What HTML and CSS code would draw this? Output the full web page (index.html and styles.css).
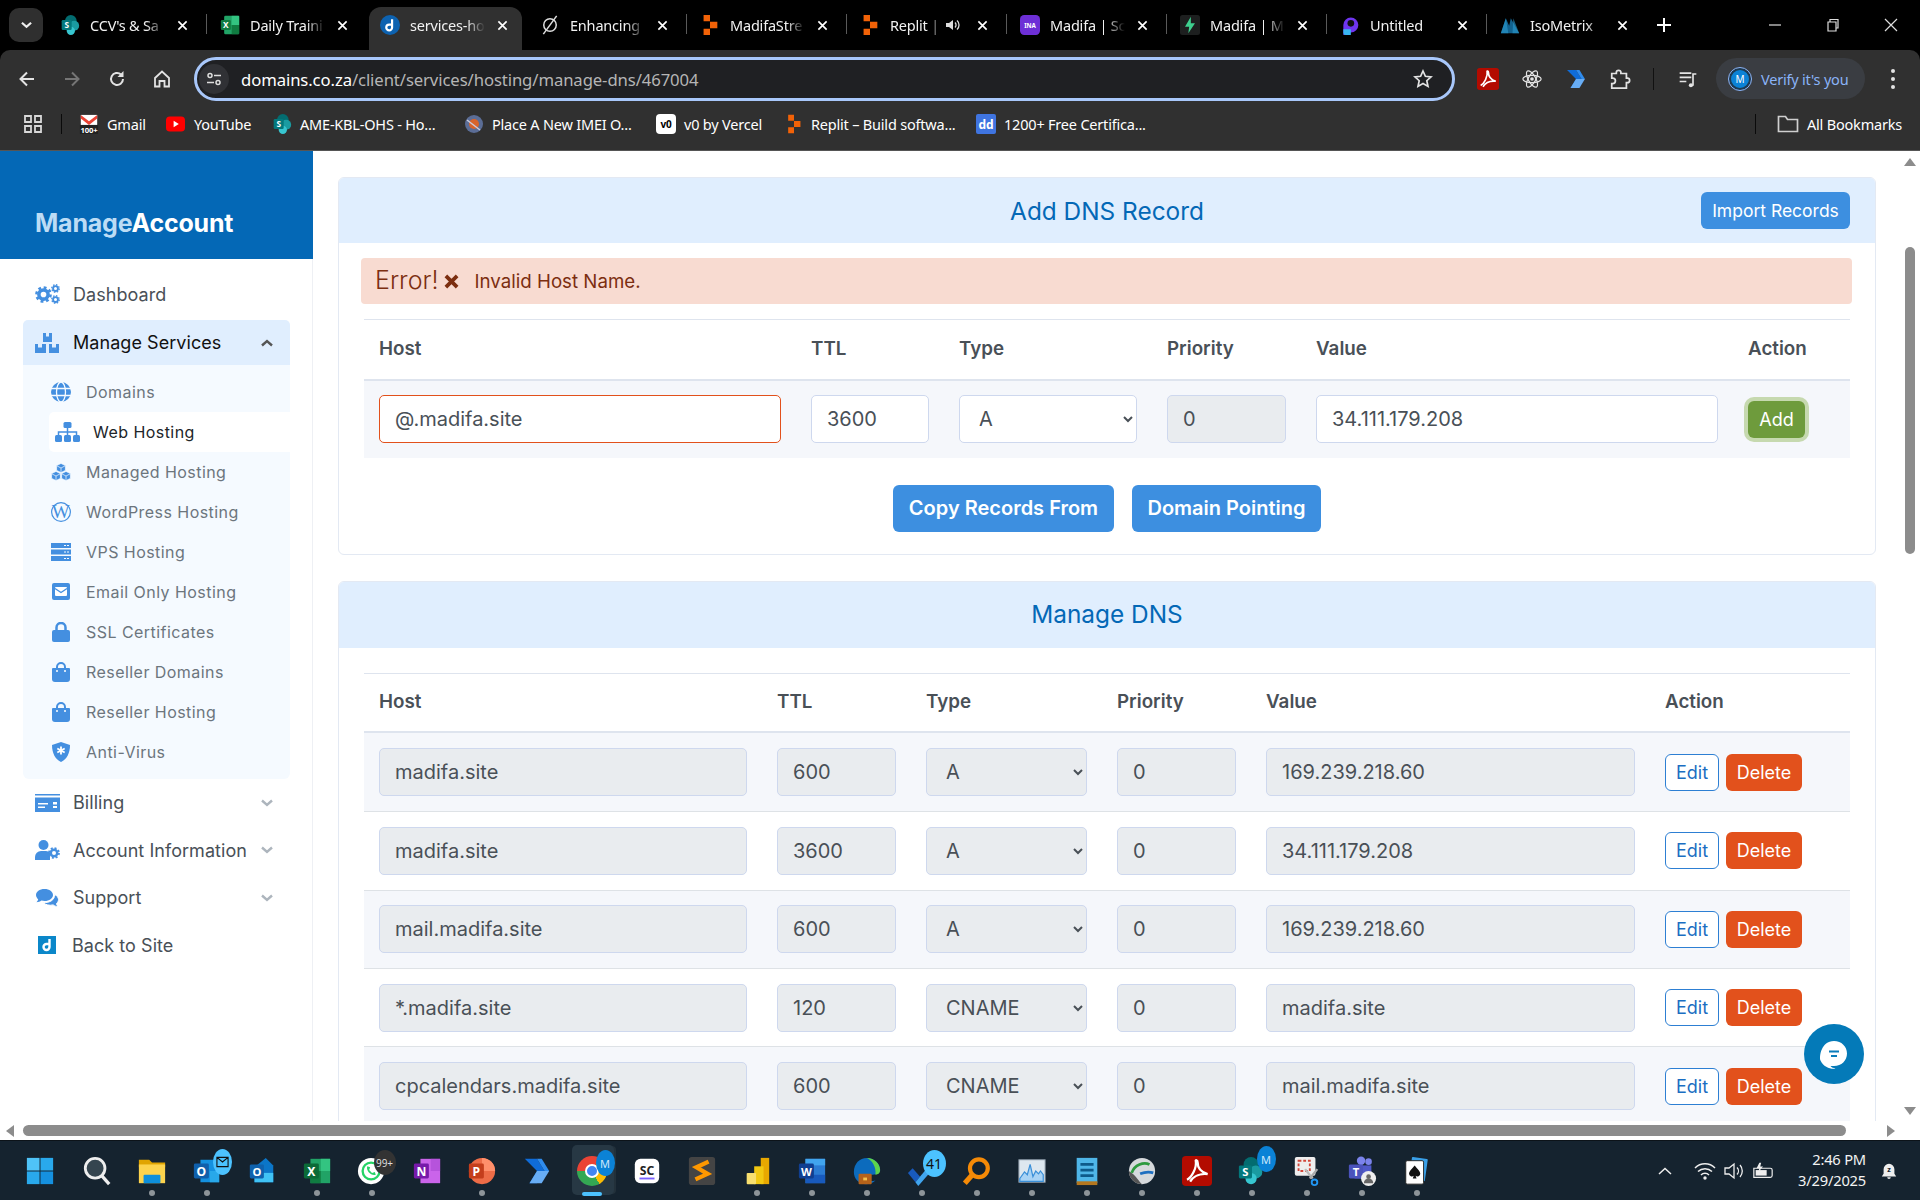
FILE: index.html
```html
<!DOCTYPE html>
<html lang="en">
<head>
<meta charset="utf-8">
<title>services-hosting</title>
<link rel="stylesheet" href="styles.css">
</head>
<body>
<svg class="defs" width="0" height="0" aria-hidden="true">
  <defs>
    <symbol id="replit" viewBox="0 0 16 24"><path fill="#f26207" d="M1 1h7v7H1zM8 8.500h8v7H8zM1 16h7v7H1z"/></symbol>
    <symbol id="sp" viewBox="0 0 24 24"><circle cx="13" cy="7" r="7" fill="#036c70"/><circle cx="17" cy="13" r="6" fill="#1a9ba1"/><circle cx="13" cy="19" r="5" fill="#37c6d0"/><rect x="2" y="6" width="12" height="12" rx="1.500" fill="#03787c"/><text x="8" y="15.500" text-anchor="middle" font-size="10" font-weight="700" fill="#fff" font-family="Noto Sans">S</text></symbol>
    <symbol id="azure" viewBox="0 0 32 32"><path fill="#0f6cd9" d="M3 3h13l8 13-8 13-8 0 8-13z"/><path fill="#68adf5" d="M16 16h13l-8 13H8z"/><path fill="#2f8cee" d="M16 3l8 13h5L21 3z"/></symbol>
    <symbol id="acrobat" viewBox="0 0 24 24"><rect width="24" height="24" rx="3" fill="#b30b00"/><path fill="none" stroke="#fff" stroke-width="1.800" d="M4 19c4-2 8-10 7-15-.5-1 1.500-1 1.500 1 0 5 3 8 8 9.500-5-.5-11 1-14 6"/></symbol>
    <symbol id="gear" viewBox="0 0 24 24"><circle cx="12" cy="12" r="6.500" fill="none" stroke="currentColor" stroke-width="5"/><circle cx="12" cy="12" r="10" fill="none" stroke="currentColor" stroke-width="3.500" stroke-dasharray="4 3.850"/></symbol>
    <symbol id="bag" viewBox="0 0 18 20"><path fill="currentColor" d="M1 6h16a1 1 0 0 1 1 1v10a3 3 0 0 1-3 3H3a3 3 0 0 1-3-3V7a1 1 0 0 1 1-1z"/><path fill="none" stroke="currentColor" stroke-width="2" d="M5 8V5a4 4 0 0 1 8 0v3"/><circle cx="5" cy="9" r="1" fill="#fff"/><circle cx="13" cy="9" r="1" fill="#fff"/></symbol>
    <symbol id="chev" viewBox="0 0 12 8"><path fill="none" stroke="currentColor" stroke-width="2.400" d="M1 1.500l5 4.500 5-4.500"/></symbol>
    <symbol id="x" viewBox="0 0 12 12"><path stroke="currentColor" stroke-width="1.800" d="M1.500 1.500l9 9M10.500 1.500l-9 9"/></symbol>
    <symbol id="cube" viewBox="0 0 10 10"><path fill="currentColor" stroke="#f5faff" stroke-width=".7" d="M5 .4l4.400 2.200v4.800L5 9.600.6 7.400V2.600z"/><path fill="none" stroke="#f5faff" stroke-width=".7" d="M.8 2.800L5 5l4.200-2.200M5 5v4.600"/></symbol>
  </defs>
</svg>

<header class="chrome">
  <div class="tabstrip">
    <div class="tab-search"><svg class="chev-sm" viewBox="0 0 12 8"><use href="#chev"/></svg></div>
    <div class="tab"><svg class="fav"><use href="#sp"/></svg><span class="tab-title">CCV's &amp; Sa</span><svg class="tab-x"><use href="#x"/></svg></div>
    <div class="tab sep"><svg class="fav" viewBox="0 0 24 24"><rect x="5" y="1" width="18" height="22" rx="1.500" fill="#21a366"/><rect x="14" y="1" width="9" height="11" fill="#33c481"/><rect x="14" y="12" width="9" height="11" fill="#107c41"/><rect x="1" y="6" width="12" height="12" rx="1.500" fill="#107c41"/><text x="7" y="15.500" text-anchor="middle" font-size="10" font-weight="700" fill="#fff" font-family="Noto Sans">X</text></svg><span class="tab-title">Daily Traini</span><svg class="tab-x"><use href="#x"/></svg></div>
    <div class="tab active"><svg class="fav" viewBox="0 0 24 24"><circle cx="12" cy="12" r="12" fill="#0d62b0"/><path fill="none" stroke="#fff" stroke-width="2.600" d="M14.500 5v10a3.500 3.500 0 1 1-3.500-3.500h3"/></svg><span class="tab-title">services-ho</span><svg class="tab-x"><use href="#x"/></svg></div>
    <div class="tab"><svg class="fav" viewBox="0 0 24 24"><circle cx="12" cy="12" r="7.500" fill="none" stroke="#ddd" stroke-width="1.800"/><path stroke="#ddd" stroke-width="1.800" d="M4 23L20 1"/></svg><span class="tab-title">Enhancing</span><svg class="tab-x"><use href="#x"/></svg></div>
    <div class="tab sep"><svg class="fav"><use href="#replit"/></svg><span class="tab-title">MadifaStre</span><svg class="tab-x"><use href="#x"/></svg></div>
    <div class="tab sep"><svg class="fav"><use href="#replit"/></svg><span class="tab-title tab-short">Replit |</span><svg class="tab-sound" viewBox="0 0 16 16"><path fill="#ddd" d="M1 6h3l4-3v10l-4-3H1z"/><path fill="none" stroke="#ddd" stroke-width="1.300" d="M10 5.500a3.500 3.500 0 0 1 0 5M12 3.500a6 6 0 0 1 0 9"/></svg><svg class="tab-x"><use href="#x"/></svg></div>
    <div class="tab sep"><svg class="fav" viewBox="0 0 24 24"><rect width="24" height="24" rx="5" fill="#6d2fd6"/><text x="12" y="15" text-anchor="middle" font-size="7.500" font-weight="700" fill="#fff" font-family="Noto Sans">INA</text></svg><span class="tab-title">Madifa | Sc</span><svg class="tab-x"><use href="#x"/></svg></div>
    <div class="tab sep"><svg class="fav" viewBox="0 0 24 24"><rect width="24" height="24" rx="3" fill="#1d1f1f"/><path fill="#3ecf8e" d="M13 2L6 14h5l-1 8 8-12h-5z"/></svg><span class="tab-title">Madifa | M</span><svg class="tab-x"><use href="#x"/></svg></div>
    <div class="tab sep"><svg class="fav" viewBox="0 0 24 24"><path fill="#6e35ee" d="M4 12a9 9 0 1 1 9 9H9v3H4z"/><path fill="#38b6f1" d="M4 17h9v7H7a3 3 0 0 1-3-3z"/><circle cx="13" cy="10" r="4" fill="#111"/></svg><span class="tab-title">Untitled</span><svg class="tab-x"><use href="#x"/></svg></div>
    <div class="tab sep"><svg class="fav" viewBox="0 0 24 24"><path fill="#12628f" d="M1 22L7 4l4 9 2-9 10 18z"/><path fill="#2c9bce" d="M7 4l3 18H1zM16 4l7 18h-8z" opacity=".6"/></svg><span class="tab-title">IsoMetrix</span><svg class="tab-x"><use href="#x"/></svg></div>
    <div class="tab-new"><svg viewBox="0 0 14 14"><path stroke="#fff" stroke-width="2" d="M7 0v14M0 7h14"/></svg></div>
    <div class="win-controls">
      <svg viewBox="0 0 14 14"><path stroke="#ddd" stroke-width="1.200" d="M1 7h12"/></svg>
      <svg viewBox="0 0 14 14"><path fill="none" stroke="#ddd" stroke-width="1.200" d="M2 4h8v9H2zM4 4V1.500h8V10h-2"/></svg>
      <svg viewBox="0 0 14 14"><path stroke="#ddd" stroke-width="1.200" d="M1 1l12 12M13 1L1 13"/></svg>
    </div>
  </div>

  <div class="toolbar">
    <svg class="nav-btn" viewBox="0 0 20 20"><path fill="none" stroke="#e3e3e3" stroke-width="2" d="M17 10H4M10 3.500L3.500 10l6.500 6.500"/></svg>
    <svg class="nav-btn" viewBox="0 0 20 20"><path fill="none" stroke="#757575" stroke-width="2" d="M3 10h13M10 3.500l6.500 6.500-6.500 6.500"/></svg>
    <svg class="nav-btn" viewBox="0 0 20 20"><path fill="none" stroke="#e3e3e3" stroke-width="2" d="M16 10a6 6 0 1 1-2-4.500"/><path fill="#e3e3e3" d="M16.500 2v6h-6z"/></svg>
    <svg class="nav-btn" viewBox="0 0 20 20"><path fill="none" stroke="#e3e3e3" stroke-width="1.800" d="M3 9l7-6.500L17 9v8.500h-4.500V12h-5v5.500H3z"/></svg>
    <div class="omnibox">
      <span class="site-info"><svg viewBox="0 0 16 16"><circle cx="4" cy="4.500" r="2" fill="none" stroke="#ddd" stroke-width="1.500"/><path stroke="#ddd" stroke-width="1.500" d="M8 4.500h7M1 11.500h7"/><circle cx="12" cy="11.500" r="2" fill="none" stroke="#ddd" stroke-width="1.500"/></svg></span>
      <span class="url"><b>domains.co.za</b>/client/services/hosting/manage-dns/467004</span>
      <svg class="star" viewBox="0 0 20 20"><path fill="none" stroke="#e3e3e3" stroke-width="1.700" d="M10 2l2.400 5.300 5.600.6-4.200 3.800 1.200 5.700-5-2.900-5 2.900 1.200-5.700L2 7.900l5.600-.6z"/></svg>
    </div>
    <div class="ext">
      <svg class="ext-ic"><use href="#acrobat"/></svg>
      <svg class="ext-ic" viewBox="0 0 24 24"><g fill="none" stroke="#e3e3e3" stroke-width="1.300"><ellipse cx="12" cy="12" rx="10" ry="4"/><ellipse cx="12" cy="12" rx="10" ry="4" transform="rotate(60 12 12)"/><ellipse cx="12" cy="12" rx="10" ry="4" transform="rotate(120 12 12)"/></g><circle cx="12" cy="12" r="2" fill="#e3e3e3"/></svg>
      <svg class="ext-ic"><use href="#azure"/></svg>
      <svg class="ext-ic" viewBox="0 0 24 24"><path fill="none" stroke="#e3e3e3" stroke-width="1.900" d="M3 6h5V5a2.500 2.500 0 0 1 5 0v1h6v5h1a2.500 2.500 0 0 1 0 5h-1v6H3v-5h1a2.500 2.500 0 0 0 0-6H3z"/></svg>
      <span class="tool-sep"></span>
      <svg class="media" viewBox="0 0 24 24"><path fill="none" stroke="#e3e3e3" stroke-width="2" d="M2 5h14M2 10h14M2 15h8"/><path fill="none" stroke="#e3e3e3" stroke-width="2" d="M18 20V6h4"/><circle cx="15.500" cy="19.500" r="2.500" fill="#e3e3e3"/></svg>
      <div class="verify"><span class="avatar">M</span><span>Verify it's you</span></div>
      <span class="dots"><i></i><i></i><i></i></span>
    </div>
  </div>

  <nav class="bookmarks">
    <svg class="apps" viewBox="0 0 18 18"><path fill="none" stroke="#d8d8d8" stroke-width="1.800" d="M1 1h6v6H1zM11 1h6v6h-6zM1 11h6v6H1zM11 11h6v6h-6z"/></svg>
    <span class="bm-sep"></span>
    <a class="bm bm-gmail"><svg viewBox="0 0 20 22"><path fill="#fff" d="M1 1h18v20H1z"/><path fill="#ea4335" d="M1 1l9 7 9-7v4l-9 7-9-7z"/><rect x="0" y="12" width="20" height="10" fill="#222"/><text x="10" y="20.500" text-anchor="middle" font-size="8.500" font-weight="700" fill="#fff" font-family="Noto Sans">100+</text></svg>Gmail</a>
    <a class="bm bm-yt"><svg viewBox="0 0 20 20"><rect y="2" width="20" height="16" rx="4" fill="#f00"/><path fill="#fff" d="M8 6.500l5.500 3.500L8 13.500z"/></svg>YouTube</a>
    <a class="bm bm-ame"><svg viewBox="0 0 24 24"><use href="#sp"/></svg>AME-KBL-OHS - Ho...</a>
    <a class="bm bm-imei"><svg viewBox="0 0 20 20"><circle cx="10" cy="10" r="9" fill="#5b6d96"/><circle cx="10" cy="10" r="5" fill="#d9642c"/><path fill="none" stroke="#ccd" stroke-width="1.500" d="M3 6l13 10"/></svg>Place A New IMEI O...</a>
    <a class="bm bm-v0"><svg viewBox="0 0 20 20"><rect width="20" height="20" rx="4" fill="#fff"/><text x="10" y="14" text-anchor="middle" font-size="10" font-weight="700" fill="#000" font-family="Noto Sans">v0</text></svg>v0 by Vercel</a>
    <a class="bm bm-replit"><svg viewBox="0 0 16 24"><use href="#replit"/></svg>Replit – Build softwa...</a>
    <a class="bm bm-dd"><svg viewBox="0 0 20 20"><rect width="20" height="20" rx="2" fill="#3f74e0"/><text x="10" y="14.500" text-anchor="middle" font-size="12" font-weight="700" fill="#fff" font-family="Noto Sans">dd</text></svg>1200+ Free Certifica...</a>
    <span class="bm-sep right"></span>
    <a class="bm bm-all"><svg viewBox="0 0 22 20"><path fill="none" stroke="#cfcfcf" stroke-width="1.700" d="M1.500 2.500h7l2 3h10v12h-19z"/></svg>All Bookmarks</a>
  </nav>
</header>

<div class="page">
  <aside class="sidebar">
    <div class="logo"><span class="logo-a">Manage</span>Account</div>
    <nav class="side-nav">
      <a class="item"><svg class="item-ic" viewBox="0 0 25 20"><use href="#gear" x="0" y="2" width="17" height="17"/><use href="#gear" x="16" y="0" width="9" height="9"/><use href="#gear" x="16" y="11" width="9" height="9"/></svg>Dashboard</a>
      <a class="item open"><svg class="item-ic" viewBox="0 0 25 20"><path fill="currentColor" d="M8 0h3v3.500h3V0h3v9H8zM0 11h3v3.500h4V11h4v9H0zM14 11h3v3.500h4V11h3v9H14z"/></svg>Manage Services<svg class="chev up" viewBox="0 0 12 8"><use href="#chev"/></svg></a>
      <div class="sub">
        <a class="sub-item"><svg class="sub-ic" viewBox="0 0 20 20"><circle cx="10" cy="10" r="10" fill="currentColor"/><g fill="none" stroke="#f5faff" stroke-width="1.300"><ellipse cx="10" cy="10" rx="4.500" ry="10"/><path d="M0 6.500h20M0 13.500h20"/></g></svg>Domains</a>
        <a class="sub-item active"><svg class="sub-ic" viewBox="0 0 25 20"><path fill="none" stroke="currentColor" stroke-width="1.500" d="M12.500 6v4M3.500 13v-3h18v3M12.500 10v3"/><rect x="8.500" y="0" width="8" height="6" rx="1.500" fill="currentColor"/><rect x="0" y="13" width="7" height="7" rx="1.500" fill="currentColor"/><rect x="9" y="13" width="7" height="7" rx="1.500" fill="currentColor"/><rect x="18" y="13" width="7" height="7" rx="1.500" fill="currentColor"/></svg>Web Hosting</a>
        <a class="sub-item"><svg class="sub-ic" viewBox="0 0 20 18"><use href="#cube" x="5" y="0" width="10" height="10"/><use href="#cube" x="0" y="8" width="10" height="10"/><use href="#cube" x="10" y="8" width="10" height="10"/></svg>Managed Hosting</a>
        <a class="sub-item"><svg class="sub-ic" viewBox="0 0 20 20"><circle cx="10" cy="10" r="9.400" fill="none" stroke="currentColor" stroke-width="1.200"/><text x="10" y="16" text-anchor="middle" font-size="19" font-family="Liberation Serif" fill="currentColor">W</text></svg>WordPress Hosting</a>
        <a class="sub-item"><svg class="sub-ic" viewBox="0 0 20 18"><path fill="currentColor" fill-rule="evenodd" d="M0 0h20v5H0zM13 2v1h2V2zM16 2v1h2V2zM0 6.500h20v5H0zM13 8.500v1h2v-1zM16 8.500v1h2v-1zM0 13h20v5H0zM13 15v1h2v-1zM16 15v1h2v-1z"/></svg>VPS Hosting</a>
        <a class="sub-item"><svg class="sub-ic email" viewBox="0 0 18 18"><rect width="18" height="17" rx="2" fill="currentColor"/><rect x="3" y="4" width="12" height="9" rx="1" fill="#fff"/><path fill="none" stroke="currentColor" stroke-width="1.400" d="M3 5.500l6 4 6-4"/></svg>Email Only Hosting</a>
        <a class="sub-item"><svg class="sub-ic email" viewBox="0 0 18 20"><path fill="none" stroke="currentColor" stroke-width="2.500" d="M4.500 9V5.500a4.500 4.500 0 0 1 9 0V9"/><rect y="8" width="18" height="12" rx="2" fill="currentColor"/></svg>SSL Certificates</a>
        <a class="sub-item"><svg class="sub-ic email" viewBox="0 0 18 20"><use href="#bag"/></svg>Reseller Domains</a>
        <a class="sub-item"><svg class="sub-ic email" viewBox="0 0 18 20"><use href="#bag"/></svg>Reseller Hosting</a>
        <a class="sub-item"><svg class="sub-ic" viewBox="0 0 20 20"><path fill="currentColor" d="M10 0l9 3c0 8-3 14-9 17C4 17 1 11 1 3z"/><path stroke="#fff" stroke-width="1.800" d="M10 4.500v8M6.300 6.500l7.400 4M13.700 6.500l-7.400 4"/></svg>Anti-Virus</a>
      </div>
      <a class="item"><svg class="item-ic" viewBox="0 0 25 18"><path fill="currentColor" fill-rule="evenodd" d="M0 0h25v1.500H0zM0 3.500h25V18H0zM3 9v1.500h10V9zM3 12.500V14h7v-1.500zM18 8v2.500h4V8zM18 12v2h4v-2z"/></svg>Billing<svg class="chev" viewBox="0 0 12 8"><use href="#chev"/></svg></a>
      <a class="item"><svg class="item-ic" viewBox="0 0 25 20"><circle cx="8.500" cy="5" r="5" fill="currentColor"/><path fill="currentColor" d="M0 20v-3a6 6 0 0 1 6-6h5a6 6 0 0 1 4 1.500V20z"/><use href="#gear" x="13" y="7" width="12" height="12"/></svg>Account Information<svg class="chev" viewBox="0 0 12 8"><use href="#chev"/></svg></a>
      <a class="item"><svg class="item-ic" viewBox="0 0 25 18"><path fill="currentColor" d="M9.500 0C14.500 0 18 2.700 18 6s-3.500 6-8.500 6c-1 0-2-.1-3-.4C5 12.800 3.500 13.300 1.500 13.300c1-1 1.500-2 1.700-3C2 9.200 1 7.700 1 6c0-3.300 3.500-6 8.500-6z"/><path fill="currentColor" stroke="#fff" stroke-width="1" d="M19.500 5.500c2.500 1 4 3 4 5 0 1.700-.8 3-2 4 .1 1 .6 2 1.500 3-2 0-3.500-.5-4.800-1.600-4 1-8-.2-9.700-2.400 6 .5 11.500-2.500 11-8z"/></svg>Support<svg class="chev" viewBox="0 0 12 8"><use href="#chev"/></svg></a>
      <a class="item back"><svg class="item-ic" viewBox="0 0 25 18"><rect x="3" width="18" height="18" fill="#0b87c9"/><path fill="none" stroke="#fff" stroke-width="2.400" d="M14.500 3v8a3 3 0 1 1-3-3h3"/></svg>Back to Site</a>
    </nav>
  </aside>

  <main class="main">
    <section class="card">
      <header class="card-head">
        <h2>Add DNS Record</h2>
        <button class="btn import">Import Records</button>
      </header>
      <div class="card-body">
        <div class="alert"><span class="alert-title">Error!</span><svg class="alert-x" viewBox="0 0 12 12"><path stroke="#7c2e10" stroke-width="3" d="M1.500 1.500l9 9M10.500 1.500l-9 9"/></svg><span>Invalid Host Name.</span></div>
        <div class="grid-table add-table">
          <div class="row head"><span>Host</span><span>TTL</span><span>Type</span><span>Priority</span><span>Value</span><span>Action</span></div>
          <div class="row shade">
            <input class="field error" value="@.madifa.site">
            <input class="field" value="3600">
            <select class="field"><option>A</option></select>
            <input class="field" value="0" disabled>
            <input class="field" value="34.111.179.208">
            <div class="actions"><button class="btn add">Add</button></div>
          </div>
        </div>
        <div class="cta"><button class="btn big copy">Copy Records From</button><button class="btn big point">Domain Pointing</button></div>
      </div>
    </section>

    <section class="card second">
      <header class="card-head tall"><h2>Manage DNS</h2></header>
      <div class="card-body">
        <div class="grid-table list-table">
          <div class="row head"><span>Host</span><span>TTL</span><span>Type</span><span>Priority</span><span>Value</span><span>Action</span></div>
          <div class="row shade">
            <input class="field" value="madifa.site" disabled><input class="field" value="600" disabled>
            <select class="field" disabled><option>A</option></select>
            <input class="field" value="0" disabled><input class="field" value="169.239.218.60" disabled>
            <div class="actions"><button class="btn edit">Edit</button><button class="btn del">Delete</button></div>
          </div>
          <div class="row">
            <input class="field" value="madifa.site" disabled><input class="field" value="3600" disabled>
            <select class="field" disabled><option>A</option></select>
            <input class="field" value="0" disabled><input class="field" value="34.111.179.208" disabled>
            <div class="actions"><button class="btn edit">Edit</button><button class="btn del">Delete</button></div>
          </div>
          <div class="row shade">
            <input class="field" value="mail.madifa.site" disabled><input class="field" value="600" disabled>
            <select class="field" disabled><option>A</option></select>
            <input class="field" value="0" disabled><input class="field" value="169.239.218.60" disabled>
            <div class="actions"><button class="btn edit">Edit</button><button class="btn del">Delete</button></div>
          </div>
          <div class="row">
            <input class="field" value="*.madifa.site" disabled><input class="field" value="120" disabled>
            <select class="field" disabled><option>CNAME</option></select>
            <input class="field" value="0" disabled><input class="field" value="madifa.site" disabled>
            <div class="actions"><button class="btn edit">Edit</button><button class="btn del">Delete</button></div>
          </div>
          <div class="row shade">
            <input class="field" value="cpcalendars.madifa.site" disabled><input class="field" value="600" disabled>
            <select class="field" disabled><option>CNAME</option></select>
            <input class="field" value="0" disabled><input class="field" value="mail.madifa.site" disabled>
            <div class="actions"><button class="btn edit">Edit</button><button class="btn del">Delete</button></div>
          </div>
        </div>
      </div>
    </section>
  </main>

  <div class="vscroll">
    <i class="arrow-up"></i>
    <i class="v-thumb"></i>
    <i class="arrow-down"></i>
  </div>

  <div class="chat"><svg viewBox="0 0 32 32"><path fill="#fff" d="M16 3c7.500 0 13 5.500 13 12.500S23.500 28 16 28c-2 0-2 0-3.500 0 1 1.500 3 2 5 2.500-4 1-12-1-15-8C1 19 3 3 16 3z"/><path stroke="#0a7dbb" stroke-width="2" d="M11 13.500h10M13 18h6"/></svg></div>
</div>

<div class="hscroll"><i class="arrow-left"></i><i class="h-thumb"></i><i class="arrow-right"></i></div>

<footer class="taskbar">
  <div class="task"><svg viewBox="0 0 32 32"><path fill="#4fc3f7" d="M2 2h13.500v13.500H2z"/><path fill="#29a9ec" d="M16.500 2H30v13.500H16.500z"/><path fill="#29a9ec" d="M2 16.500h13.500V30H2z"/><path fill="#1590df" d="M16.500 16.500H30V30H16.500z"/></svg></div>
  <div class="task"><svg viewBox="0 0 32 32"><circle cx="14" cy="13" r="10.500" fill="#35454f" stroke="#eee" stroke-width="3"/><path stroke="#eee" stroke-width="3.500" d="M21 21l8 9"/></svg></div>
  <div class="task dot"><svg viewBox="0 0 32 32"><path fill="#e0a400" d="M2 4h11l3 3h14v5H2z"/><path fill="#fcd34d" d="M2 9h28v20H2z"/><rect x="11" y="20" width="18" height="9" rx="1" fill="#0d8fdc" transform="translate(-4 0)"/></svg></div>
  <div class="task dot"><svg viewBox="0 0 32 32"><path fill="#1490df" d="M9 4h20v24H9z"/><path fill="#28a8ea" d="M19 16h10v12H19z"/><rect x="2" y="8" width="16" height="16" rx="1.500" fill="#0f5fab"/><text x="10" y="21" text-anchor="middle" font-size="13" font-weight="700" fill="#fff" font-family="Noto Sans">O</text></svg><span class="badge mail"><svg viewBox="0 0 14 12"><path fill="none" stroke="#111" stroke-width="1.200" d="M1 1h12v10H1zM1 1l6 5 6-5"/></svg></span></div>
  <div class="task"><svg viewBox="0 0 32 32"><path fill="#0b76c8" d="M8 12L20 2l8 8v18H8z"/><path fill="#40c3f5" d="M8 18h20v10H8z"/><rect x="3" y="9" width="15" height="15" rx="1.500" fill="#0f62ad"/><text x="10.500" y="21" text-anchor="middle" font-size="12" font-weight="700" fill="#fff" font-family="Noto Sans">O</text></svg></div>
  <div class="task dot"><svg viewBox="0 0 32 32"><path fill="#21a366" d="M9 3h21v26H9z"/><path fill="#33c481" d="M20 3h10v13H20z"/><path fill="#107c41" d="M9 16h11v13H9z"/><rect x="2" y="8" width="16" height="16" rx="1.500" fill="#0b6a37"/><text x="10" y="21" text-anchor="middle" font-size="13" font-weight="700" fill="#fff" font-family="Noto Sans">X</text></svg></div>
  <div class="task dot"><svg viewBox="0 0 32 32"><circle cx="15" cy="16" r="14" fill="#fff"/><circle cx="15" cy="16" r="9" fill="none" stroke="#25d366" stroke-width="2.500"/><path fill="#25d366" d="M11 11l3 1-1 3 3 3 3-1 1 3c-4 2-11-4-9-9z"/></svg><span class="badge count dark">99+</span></div>
  <div class="task"><svg viewBox="0 0 32 32"><path fill="#ca64ea" d="M9 3h21v26H9z"/><path fill="#ae4bd5" d="M20 3h10v13H20z" opacity=".7"/><rect x="2" y="8" width="16" height="16" rx="1.500" fill="#7719aa"/><text x="10" y="21" text-anchor="middle" font-size="13" font-weight="700" fill="#fff" font-family="Noto Sans">N</text></svg></div>
  <div class="task dot"><svg viewBox="0 0 32 32"><circle cx="16" cy="16" r="14" fill="#ed6c47"/><path fill="#ff8f6b" d="M16 2a14 14 0 0 1 14 14H16z"/><rect x="2" y="8" width="16" height="16" rx="1.500" fill="#c43e1c"/><text x="10" y="21" text-anchor="middle" font-size="13" font-weight="700" fill="#fff" font-family="Noto Sans">P</text></svg></div>
  <div class="task"><svg viewBox="0 0 32 32"><use href="#azure"/></svg></div>
  <div class="task current"><span class="chrome-logo"><i></i></span><span class="badge profile">M</span></div>
  <div class="task"><svg viewBox="0 0 32 32"><rect x="3" y="3" width="26" height="26" rx="6" fill="#fff"/><text x="16" y="20" text-anchor="middle" font-size="13" font-weight="700" fill="#222" font-family="Noto Sans">SC</text><path stroke="#7b61ff" stroke-width="2" d="M8 24h16"/></svg></div>
  <div class="task"><svg viewBox="0 0 32 32"><rect x="2" y="1" width="28" height="30" rx="3" fill="#444"/><path fill="none" stroke="#ff9800" stroke-width="4.500" d="M23 6L10 12l12 7-13 6"/></svg></div>
  <div class="task dot"><svg viewBox="0 0 32 32"><rect x="20" y="2" width="9" height="28" fill="#e8a800"/><rect x="13" y="11" width="10" height="19" fill="#f2c811"/><rect x="5" y="18" width="10" height="12" rx="1" fill="#f8df6f"/></svg></div>
  <div class="task dot"><svg viewBox="0 0 32 32"><path fill="#2b7cd3" d="M9 3h21v26H9z"/><path fill="#185abd" d="M9 20h21v9H9z"/><path fill="#41a5ee" d="M9 3h21v7H9z"/><rect x="2" y="8" width="16" height="16" rx="1.500" fill="#103f91"/><text x="10" y="21" text-anchor="middle" font-size="12" font-weight="700" fill="#fff" font-family="Noto Sans">W</text></svg></div>
  <div class="task dot"><svg viewBox="0 0 32 32"><path fill="#0c6bbd" d="M2 17C2 8 8 2 16 2c8 0 14 6 14 13 0 3-3 5-8 5H12c0 5 5 8 13 6-3 3-7 4-10 4C7 30 2 24 2 17z"/><path fill="#5ed44b" d="M16 2c8 0 14 6 14 13 0 3-2 5-5 5 1-8-3-15-9-18z"/><rect x="7" y="19" width="14" height="11" rx="1" fill="#b4621a"/><rect x="12" y="23" width="4" height="3" fill="#f5c04a"/></svg></div>
  <div class="task dot"><svg viewBox="0 0 32 32"><path fill="#185abd" d="M1 18l5-5 8 9-5 6z"/><path fill="#41a5ee" d="M9 28l18-22 4 4-19 22z"/></svg><span class="badge count blue">41</span></div>
  <div class="task dot"><svg viewBox="0 0 32 32"><circle cx="18" cy="13" r="9.500" fill="none" stroke="#f58a07" stroke-width="4.500"/><path stroke="#f58a07" stroke-width="5.500" d="M11 20L3 29"/></svg></div>
  <div class="task dot"><svg viewBox="0 0 32 32"><rect x="2" y="4" width="28" height="24" fill="#dde7ef" stroke="#8a98a5" stroke-width="1"/><path fill="#a9d3f5" stroke="#3a8fd8" stroke-width="1.300" d="M3 24l5-7 3 3 3-11 3 13 3-6 3 3 2-3 3 4v7H3z"/></svg></div>
  <div class="task dot"><svg viewBox="0 0 32 32"><rect x="5" y="2" width="22" height="27" fill="#4fb6e8"/><rect x="5" y="27" width="22" height="4" fill="#b4771f"/><path stroke="#0e5a8a" stroke-width="3" d="M9 9h14M9 15h14M9 21h14"/></svg></div>
  <div class="task dot"><svg viewBox="0 0 32 32"><circle cx="16" cy="16" r="14" fill="#d5d9dc"/><path fill="#555" d="M2 16a14 14 0 0 0 14 14c-6-6-6-9-14-14z"/><path fill="none" stroke="#2d9a3f" stroke-width="3" d="M5 18C8 9 18 6 24 9"/><path fill="none" stroke="#1e6fc0" stroke-width="3" d="M14 19c5-2 11-2 14-1"/></svg></div>
  <div class="task dot"><svg viewBox="0 0 32 32"><use href="#acrobat"/></svg></div>
  <div class="task dot"><svg viewBox="0 0 32 32"><circle cx="15" cy="9" r="8" fill="#036c70"/><circle cx="20" cy="17" r="7" fill="#1a9ba1"/><circle cx="15" cy="24" r="6" fill="#37c6d0"/><rect x="2" y="10" width="14" height="14" rx="1.500" fill="#03787c"/><text x="9" y="21.500" text-anchor="middle" font-size="12" font-weight="700" fill="#fff" font-family="Noto Sans">S</text></svg><span class="badge profile up">M</span></div>
  <div class="task dot"><svg viewBox="0 0 32 32"><rect x="3" y="1" width="22" height="20" rx="2" fill="#eee"/><path fill="none" stroke="#d2473a" stroke-width="2" stroke-dasharray="3 2" d="M7 5h12v11H7z"/><path stroke="#bbb" stroke-width="2.500" d="M14 14l8 10"/><path stroke="#aaa" stroke-width="2.500" d="M27 14L19 24"/><circle cx="24" cy="28" r="3" fill="none" stroke="#2196f3" stroke-width="2"/></svg></div>
  <div class="task dot"><svg viewBox="0 0 32 32"><circle cx="23" cy="6" r="3.500" fill="#7b83eb"/><circle cx="15" cy="5" r="4.500" fill="#7b83eb"/><path fill="#5059c9" d="M8 10h18v14H8z"/><rect x="2" y="9" width="15" height="15" rx="1.500" fill="#4b53bc"/><text x="9.500" y="21" text-anchor="middle" font-size="12" font-weight="700" fill="#fff" font-family="Noto Sans">T</text><circle cx="23" cy="24" r="8" fill="#eee"/><circle cx="23" cy="22" r="2.500" fill="#666"/><path fill="#666" d="M18 29a5 5 0 0 1 10 0z"/></svg></div>
  <div class="task dot"><svg viewBox="0 0 32 32"><rect x="9" y="2" width="17" height="24" rx="1" fill="#3aa0e8" transform="rotate(8 17 14)"/><rect x="4" y="5" width="19" height="25" rx="1.500" fill="#fff" stroke="#222"/><path fill="#111" d="M13.500 10c3 4 6 6 6 9a3 3 0 0 1-5 2l1 3h-4l1-3a3 3 0 0 1-5-2c0-3 3-5 6-9z"/></svg></div>
  <div class="tray">
    <svg class="tray-chev" viewBox="0 0 14 8"><path fill="none" stroke="#eee" stroke-width="1.500" d="M1 7l6-5.500L13 7"/></svg>
    <svg class="tray-ic" viewBox="0 0 22 20"><g fill="none" stroke="#eee" stroke-width="1.500"><path d="M1 7a14 14 0 0 1 20 0M4 10.500a10 10 0 0 1 14 0M7 14a5.500 5.500 0 0 1 8 0"/></g><circle cx="11" cy="17" r="1.700" fill="#eee"/></svg>
    <svg class="tray-ic" viewBox="0 0 22 20"><path fill="none" stroke="#eee" stroke-width="1.300" d="M2 7h4l5-4v14l-5-4H2zM14 6.500a5 5 0 0 1 0 7M17 4a9 9 0 0 1 0 12"/></svg>
    <svg class="tray-ic" viewBox="0 0 24 20"><path fill="none" stroke="#eee" stroke-width="1.300" d="M2 7h18a2 2 0 0 1 2 2v6a2 2 0 0 1-2 2H2z"/><rect x="4" y="9" width="12" height="6" fill="#eee"/><path fill="#eee" d="M8 1L5 7h3l-1 4 5-6H9l1-4z"/></svg>
    <div class="clock"><span>2:46 PM</span><span>3/29/2025</span></div>
    <svg class="tray-bell" viewBox="0 0 20 22"><path fill="#eee" d="M10 3a6 6 0 0 1 6 6v5l2 3H2l2-3V9a6 6 0 0 1 6-6zM8 18h4a2 2 0 0 1-4 0z"/><text x="10" y="12" text-anchor="middle" font-size="8" font-weight="700" fill="#15232f" font-family="Noto Sans">z</text></svg>
  </div>
</footer>
</body>
</html>
```

FILE: styles.css
```css
* { box-sizing: border-box; }
html, body { margin: 0; height: 1200px; overflow: hidden; background: #fff; }
body { font-family: Inter, "Noto Sans", sans-serif; display: flex; flex-direction: column; width: 1920px; }
.defs { position: absolute; }
i { display: block; }
svg { display: block; flex: none; }

/* Browser chrome */
.chrome { height: 151px; flex: none; background: #000; font-family: "Noto Sans", "Open Sans", sans-serif; color: #fff; border-bottom: 1px solid #555; }
.tabstrip { height: 50px; display: flex; align-items: flex-end; padding-left: 9px; position: relative; }
.tab-search { width: 34px; height: 34px; margin: 0 6px 8px 0; background: #2f2f2f; border-radius: 10px; display: flex; align-items: center; justify-content: center; color: #eee; }
.chev-sm { width: 11px; height: 8px; }
.tab { width: 160px; height: 43px; display: flex; align-items: center; padding: 0 0 7px 11px; position: relative; color: #f1f1f1; font-size: 14.500px; letter-spacing: -.2px; }
.tab.sep::before { content: ""; position: absolute; left: -3px; top: 7px; height: 20px; width: 1px; background: #5a5a5a; }
.tab.active { background: #303030; border-radius: 12px 12px 0 0; width: 153px; margin-right: 7px; }
.fav { width: 20px; height: 22px; margin-right: 10px; }
.tab-title { width: 75px; white-space: nowrap; overflow: hidden; -webkit-mask-image: linear-gradient(90deg, #000 75%, transparent); mask-image: linear-gradient(90deg, #000 75%, transparent); }
.tab-short { width: 52px; }
.tab-sound { width: 16px; height: 16px; margin: 0 2px 0 3px; }
.tab-x { width: 11px; height: 11px; margin-left: 12px; color: #fff; }
.tab-sound + .tab-x { margin-left: 14px; }
.tab-new { width: 14px; height: 14px; margin: 0 0 18px 8px; }
.win-controls { position: absolute; top: 18px; right: 22px; display: flex; gap: 44px; }
.win-controls svg { width: 14px; height: 14px; }

.toolbar { height: 58px; background: #303030; border-radius: 10px 10px 0 0; display: flex; align-items: center; padding: 0 0 0 17px; }
.nav-btn { width: 20px; height: 20px; margin-right: 25px; }
.nav-btn:nth-child(4) { margin-right: 22px; }
.omnibox { width: 1261px; height: 44px; border: 3px solid #a8c7fa; background: #1f2023; border-radius: 22px; display: flex; align-items: center; }
.site-info { width: 30px; height: 30px; margin-left: 2px; border-radius: 50%; background: #303135; display: flex; align-items: center; justify-content: center; flex: none; }
.site-info svg { width: 16px; height: 16px; }
.url { margin-left: 12px; font-size: 16.700px; color: #b5b5b5; white-space: nowrap; letter-spacing: -.1px; flex: 1; }
.url b { font-weight: 400; color: #fff; }
.star { width: 20px; height: 20px; margin-right: 19px; }
.ext { display: flex; align-items: center; flex: 1; }
.ext-ic { width: 22px; height: 22px; margin-right: 22px; }
.ext-ic:first-child { margin-left: 22px; }
.tool-sep { width: 1px; height: 22px; background: #111; margin-right: 24px; }
.media { width: 20px; height: 20px; }
.verify { margin-left: 18px; width: 149px; height: 41px; margin-top: -1px; border-radius: 21px; background: #3a3d42; color: #8ab4f8; font-size: 14.500px; display: flex; align-items: center; gap: 10px; padding-left: 13px; letter-spacing: -.2px; white-space: nowrap; }
.avatar { width: 22px; height: 22px; border-radius: 50%; background: #0b82d6; border: 2px solid #1d3a52; outline: 1px solid #8ab4f8; color: #fff; font-size: 10px; display: flex; align-items: center; justify-content: center; letter-spacing: 0; }
.dots { margin-left: 26px; display: flex; flex-direction: column; gap: 4px; }
.dots i { width: 4px; height: 4px; border-radius: 50%; background: #e3e3e3; }

.bookmarks { height: 42px; background: #303030; display: flex; align-items: center; padding: 0 0 10px 24px; font-size: 14.500px; letter-spacing: -.2px; }
.apps { width: 18px; height: 18px; }
.bm-sep { width: 1px; height: 20px; background: #0a0a0a; margin: 0 17px 0 19px; }
.bm-sep.right { margin: 0 21px 0 auto; }
.bm { display: flex; align-items: center; white-space: nowrap; color: #fff; }
.bm svg { width: 20px; height: 20px; margin-right: 8px; }
.bm-gmail { width: 87px; }
.bm-yt { width: 106px; }
.bm-yt svg { margin-right: 9px; width: 19px; }
.bm-ame { width: 192px; }
.bm-imei { width: 192px; }
.bm-v0 { width: 130px; }
.bm-replit { width: 190px; }
.bm-replit svg { width: 16px; margin-right: 9px; }
.bm-all { padding-right: 18px; }
.bm-all svg { width: 22px; }

/* Page */
.page { height: 970px; flex: none; display: flex; position: relative; overflow: hidden; }
.sidebar { width: 313px; flex: none; border-right: 1px solid #eef0f4; }
.logo { height: 108px; background: #0468b6; color: #fff; font-size: 25px; font-weight: 700; padding: 57px 0 0 35px; letter-spacing: -.2px; margin-right: -1px; }
.logo-a { color: #bcdcf5; }
.side-nav { padding: 12px 22px 0 23px; }
.item { height: 47.500px; display: flex; align-items: center; padding-left: 12px; font-size: 18px; color: #495057; letter-spacing: .05px; }
.item:first-child { height: 46px; margin-bottom: 3px; }
.item-ic { width: 25px; height: 20px; margin-right: 13px; color: #448fe0; }
.item.back .item-ic { margin-right: 12px; }
.item.open { height: 45px; background: #e0eefe; border-radius: 5px 5px 0 0; color: #111; }
.chev { width: 12px; height: 8px; margin: 0 17px 0 auto; color: #adb5bd; }
.chev.up { color: #555; transform: rotate(180deg); }
.sub { background: #f5faff; padding: 7px 0 7px 28px; border-radius: 0 0 6px 6px; }
.sub-item { height: 40px; display: flex; align-items: center; font-size: 16px; color: #6c757d; letter-spacing: .45px; white-space: nowrap; }
.sub-ic { width: 20px; height: 20px; margin-right: 15px; color: #448fe0; }
.sub-ic.email { width: 18px; margin-left: 1px; margin-right: 16px; }
.sub-item.active { background: #fff; margin-left: -2px; padding-left: 6px; color: #212529; border-radius: 5px 0 0 5px; }
.sub-item.active .sub-ic { width: 25px; margin-right: 13px; }

.main { flex: 1; min-width: 0; padding: 26px 24px 0 25px; overflow: hidden; }
.card { border: 1px solid #e3e9f3; border-radius: 6px; background: #fff; }
.card.second { margin-top: 26px; }
.card-head { height: 65px; background: #e0eefe; border-radius: 5px 5px 0 0; position: relative; display: flex; align-items: center; justify-content: center; }
.card-head.tall { height: 66px; padding-bottom: 2px; }
.card-head h2 { margin: 0; font-size: 24.400px; font-weight: 400; color: #0468b6; }
.card-body { padding: 15px 25px 22px 25px; }
.second .card-body { padding-top: 25px; }
.btn { font-family: inherit; border: 1px solid transparent; cursor: pointer; color: #fff; background: #3d8fe0; border-radius: 6px; padding: 0; }
.import { position: absolute; right: 25px; top: 14px; width: 149px; height: 37px; font-size: 17.500px; }
.alert { margin: 0 -2px 15px -3px; height: 46px; background: #f8dbd1; border-radius: 4px; color: #7c2e10; display: flex; align-items: center; padding-left: 14px; font-size: 18.700px; }
.alert-title { font-size: 25px; font-weight: 300; margin: -3px 5px 0 0; }
.alert-x { width: 15px; height: 15px; margin-right: 16px; }

.row { display: grid; align-items: center; height: 78.400px; border-top: 1px solid #dee2e6; }
.row > * { margin: 0 15px; min-width: 0; }
.row.shade { background: #f5f7fb; }
.row.head { height: 61.500px; padding-bottom: 2px; border-top: 1px solid #dee4ee; border-bottom: 2px solid #dee4ee; font-size: 18.800px; font-weight: 600; color: #495057; }
.row.head + .row { border-top: 0; }
.add-table .row { grid-template-columns: 432px 148px 208px 149px 432px 117px; }
.add-table .row.shade { height: 77.400px; }
.list-table .row { grid-template-columns: 398px 149px 191px 149px 399px 200px; }
.list-table .row.head { height: 60px; }
.field { height: 48px; border: 1px solid #ced8ee; border-radius: 5px; background: #fff; color: #495057; font: 400 20px Inter, sans-serif; padding: 0 15px; width: calc(100% - 30px); }
.field:disabled { background: #e9ecef; color: #495057; opacity: 1; }
.field.error { border-color: #e2511c; }
.actions { display: flex; gap: 7px; align-items: center; }
.add { width: 57px; height: 37px; font-size: 18px; background: #6e9b3c; box-shadow: 0 0 0 4px #c6d9af; }
.edit { width: 54px; height: 37px; background: #fff; color: #1b6ec2; border-color: #2d7fd3; font-size: 18px; }
.del { width: 76px; height: 37px; background: #e2511c; font-size: 18px; }
.cta { display: flex; justify-content: center; gap: 18px; margin-top: 27px; }
.big { height: 47px; font-size: 20px; font-weight: 600; }
.copy { width: 221px; }
.point { width: 189px; }

.vscroll { width: 20px; flex: none; display: flex; flex-direction: column; align-items: center; padding-top: 7px; position: relative; background: #fff; }
.arrow-up { width: 0; height: 0; border: 6px solid transparent; border-top: 0; border-bottom: 8px solid #8c8c8c; }
.v-thumb { width: 10px; height: 307px; margin-top: 81px; border-radius: 5px; background: #8c8c8c; }
.arrow-down { position: absolute; bottom: 6px; width: 0; height: 0; border: 6px solid transparent; border-bottom: 0; border-top: 8px solid #8c8c8c; }
.chat { position: absolute; left: 1804px; top: 873px; width: 60px; height: 60px; border-radius: 50%; background: #047ab8; display: flex; align-items: center; justify-content: center; }
.chat svg { width: 32px; height: 32px; }

.hscroll { height: 19px; flex: none; background: #fff; display: flex; align-items: center; padding-left: 6px; }
.arrow-left { width: 0; height: 0; border: 6px solid transparent; border-left: 0; border-right: 8px solid #8c8c8c; }
.h-thumb { width: 1823px; height: 11px; margin-left: 9px; border-radius: 6px; background: #8c8c8c; }
.arrow-right { width: 0; height: 0; margin-left: 41px; border: 6px solid transparent; border-right: 0; border-left: 8px solid #8c8c8c; }

/* Taskbar */
.taskbar { height: 60px; flex: none; background: #15232f; display: flex; align-items: center; padding-left: 12.500px; position: relative; border-top: 1px solid #0c1319; }
.task { width: 55px; height: 100%; display: flex; align-items: center; justify-content: center; position: relative; flex: none; }
.task:first-child { margin-right: 2px; }
.task > svg { width: 30px; height: 30px; }
.task.dot::after { content: ""; position: absolute; bottom: 4px; left: 50%; margin-left: -3px; width: 6px; height: 6px; border-radius: 50%; background: #8d9499; }
.task.current::before { content: ""; position: absolute; left: 7px; top: 4px; width: 42px; height: 50px; border-radius: 5px; background: #273844; box-shadow: 3px 0 0 -1px #22303a; }
.task.current::after { content: ""; position: absolute; bottom: 4px; left: 50%; margin-left: -10px; width: 20px; height: 4px; border-radius: 2px; background: #4cc2ff; }
.chrome-logo { width: 30px; height: 30px; border-radius: 50%; background: conic-gradient(from 30deg, #fbbc04 0 120deg, #34a853 120deg 240deg, #ea4335 240deg 360deg); display: flex; align-items: center; justify-content: center; position: relative; }
.chrome-logo i { width: 14px; height: 14px; border-radius: 50%; background: #4285f4; border: 2px solid #fff; }
.badge { position: absolute; display: flex; align-items: center; justify-content: center; border-radius: 50%; font-family: "Noto Sans", sans-serif; }
.badge.mail { width: 19px; height: 26px; top: 8px; right: 3px; background: #4cc2ff; }
.badge.mail svg { width: 13px; height: 12px; }
.badge.count { width: 19px; height: 20px; top: 9px; right: 4px; font-size: 11px; color: #fff; }
.badge.count.dark { background: #333; color: #ddd; width: 22px; height: 25px; font-size: 10px; }
.badge.count.blue { background: #4cc2ff; color: #111; width: 23px; height: 27px; top: 9px; right: 4px; font-size: 14px; }
.badge.profile { width: 19px; height: 26px; top: 9px; right: 5px; background: #0b82d6; color: #cfe8fb; font-size: 11px; }
.badge.profile.up { top: 5px; right: 4px; }
.tray { position: absolute; top: 0; bottom: 0; left: 1658px; right: 0; display: flex; align-items: center; color: #eee; }
.tray-chev { width: 14px; height: 8px; }
.tray-ic { width: 22px; height: 20px; margin-left: 7px; }
.tray-ic:nth-child(2) { margin-left: 22px; }
.clock { width: 92px; margin-top: -2px; display: flex; flex-direction: column; align-items: flex-end; font-family: "Noto Sans", sans-serif; font-size: 14.700px; line-height: 21px; letter-spacing: -.2px; color: #f3f3f3; }
.tray-bell { width: 18px; height: 20px; margin-left: 14px; }
```
